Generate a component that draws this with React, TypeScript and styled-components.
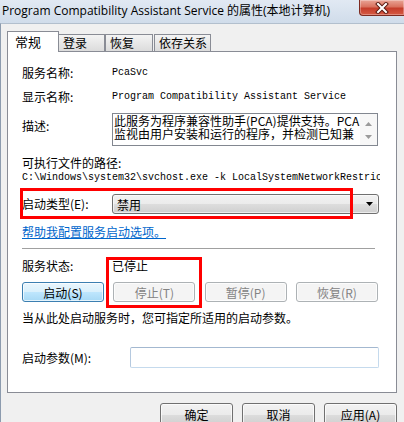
import React from "react";
import styled, { createGlobalStyle } from "styled-components";

const GlobalStyle = createGlobalStyle`
  html, body {
    margin: 0;
    padding: 0;
    background: #f0f0f0;
  }
  body {
    font-family: "Noto Sans CJK SC", sans-serif;
    font-size: 12px;
    color: #000;
  }
`;

const CJK = `"Noto Sans CJK SC", sans-serif`;
const MONO = `"Liberation Mono", "Noto Sans CJK SC", monospace`;

// window frame
const Window = styled.div`
  position: relative;
  width: 404px;
  height: 422px;
  overflow: hidden;
  background: #f0f0f0;
  display: flex;
  flex-direction: column;
`;

const TitleBar = styled.div`
  height: 23px;
  flex: none;
  display: flex;
  align-items: flex-start;
  justify-content: space-between;
  background: linear-gradient(#e1e9f3, #d0dcea);
`;

const Title = styled.div`
  padding: 3px 0 0 2px;
  font-family: "Open Sans", "Noto Sans CJK SC", sans-serif;
  font-size: 12px;
  line-height: 16px;
  white-space: nowrap;
`;

const CloseButton = styled.div`
  flex: none;
  width: 45px;
  height: 16px;
  box-sizing: border-box;
  border: 1px solid #7d2a20;
  border-top: none;
  border-right: none;
  border-radius: 0 0 0 4px;
  background: linear-gradient(#e9a496 0%, #d9725f 45%, #c53d2b 55%, #d65a44 100%);
  box-shadow: inset 0 0 0 1px rgba(255, 255, 255, 0.3);
  display: flex;
  align-items: center;
  justify-content: center;
`;

const Client = styled.div`
  flex: 1;
  display: flex;
  flex-direction: column;
  border-top: 1px solid #b2bfcd;
  border-left: 1px solid #8c9bae;
  padding: 7px 7px 0 6px;
`;

// tabs
const TabStrip = styled.div`
  height: 20px;
  display: flex;
  align-items: flex-end;
`;

const Tab = styled.div<{ $active?: boolean; $w: number; $ml?: number }>`
  position: relative;
  box-sizing: border-box;
  width: ${(p) => p.$w}px;
  height: ${(p) => (p.$active ? 21 : 17)}px;
  margin-left: ${(p) => p.$ml ?? 0}px;
  margin-bottom: ${(p) => (p.$active ? -1 : 0)}px;
  z-index: ${(p) => (p.$active ? 1 : 0)};
  padding-left: ${(p) => (p.$active ? 7 : 4)}px;
  border: 1px solid #898c95;
  border-bottom: none;
  background: ${(p) =>
    p.$active ? "#fff" : "linear-gradient(#f4f4f4, #e8e8e8 50%, #dcdcdc)"};
  display: flex;
  align-items: center;
  font-family: ${CJK};
  font-size: ${(p) => (p.$active ? 13 : 12)}px;
  line-height: 16px;
`;

const Panel = styled.div`
  box-sizing: border-box;
  height: 342px;
  border: 1px solid #898c95;
  background: #fff;
  padding: 0 16px 0 14px;
  display: flex;
  flex-direction: column;
`;

// form rows
const Row = styled.div<{ $mt: number; $h: number }>`
  display: flex;
  align-items: center;
  margin-top: ${(p) => p.$mt}px;
  height: ${(p) => p.$h}px;
  flex: none;
`;

const Label = styled.div<{ $w?: number; $pt?: number }>`
  flex: none;
  width: ${(p) => p.$w ?? 90}px;
  align-self: ${(p) => (p.$pt !== undefined ? "flex-start" : "center")};
  padding-top: ${(p) => p.$pt ?? 0}px;
  font-family: ${CJK};
  font-size: 12px;
  line-height: 16px;
  white-space: nowrap;
`;

const Value = styled.div`
  font-family: ${MONO};
  font-size: 10px;
  line-height: 16px;
  white-space: nowrap;
`;

const PlainText = styled.div`
  font-family: ${CJK};
  font-size: 12px;
  line-height: 16px;
  white-space: nowrap;
`;

const PathText = styled.div`
  font-family: ${MONO};
  font-size: 10px;
  line-height: 14px;
  white-space: nowrap;
  overflow: hidden;
  height: 14px;
  flex: none;
`;

const DescBox = styled.div`
  box-sizing: border-box;
  width: 266px;
  height: 33px;
  border: 1px solid #828790;
  display: flex;
  overflow: hidden;
`;

const DescText = styled.div`
  flex: 1;
  overflow: hidden;
  padding-left: 1px;
  font-family: ${CJK};
  font-size: 12px;
  line-height: 13px;
  white-space: nowrap;
`;

const ScrollBar = styled.div`
  flex: none;
  width: 17px;
  background: #f7f7f7;
  display: flex;
  flex-direction: column;
  align-items: center;
  justify-content: space-between;
  padding: 8px 0 6px;
`;

const Select = styled.div`
  box-sizing: border-box;
  width: 267px;
  height: 20px;
  border: 1px solid #707070;
  border-radius: 3px;
  background: linear-gradient(#f2f2f2 0%, #ebebeb 50%, #dddddd 51%, #cfcfcf 100%);
  box-shadow: inset 0 0 0 1px rgba(255, 255, 255, 0.6);
  display: flex;
  align-items: center;
  justify-content: space-between;
  padding: 0 5px 0 4px;
  font-family: ${CJK};
  font-size: 12px;
`;

const Link = styled.a`
  align-self: flex-start;
  color: #0066cc;
  text-decoration: underline;
  font-family: ${CJK};
  font-size: 12px;
  line-height: 16px;
  cursor: pointer;
`;

const Separator = styled.div`
  width: 353px;
  height: 1px;
  margin-top: 8px;
  background: #a0a0a0;
  flex: none;
`;

const ButtonRow = styled.div`
  width: 356px;
  margin-top: 8px;
  display: flex;
  justify-content: space-between;
`;

const Button = styled.div<{ $variant?: "default" | "focused" | "disabled"; $w?: number; $h?: number }>`
  box-sizing: border-box;
  width: ${(p) => p.$w ?? 82}px;
  height: ${(p) => p.$h ?? 20}px;
  border-radius: 3px;
  border: 1px solid
    ${(p) =>
      p.$variant === "focused" ? "#3c7fb1" : p.$variant === "disabled" ? "#adb2b5" : "#707070"};
  background: ${(p) =>
    p.$variant === "focused"
      ? "linear-gradient(#eaf6fd 0%, #d9f0fc 50%, #bee6fd 51%, #a7d9f5 100%)"
      : p.$variant === "disabled"
      ? "#f4f4f4"
      : "linear-gradient(#f2f2f2 0%, #ebebeb 50%, #dddddd 51%, #cfcfcf 100%)"};
  box-shadow: inset 0 0 0 1px rgba(255, 255, 255, 0.7);
  color: ${(p) => (p.$variant === "disabled" ? "#838383" : "#000")};
  display: flex;
  align-items: center;
  justify-content: center;
  font-family: ${CJK};
  font-size: 12px;
  white-space: nowrap;
`;

const Input = styled.div`
  box-sizing: border-box;
  width: 249px;
  height: 21px;
  border: 1px solid #abadb3;
  border-top-color: #a3b8d0;
  border-right-color: #c5daed;
  border-bottom-color: #c5daed;
  border-left-color: #b5c9df;
  border-radius: 2px;
  background: #fff;
`;

const Footer = styled.div`
  margin-top: 10px;
  display: flex;
  justify-content: flex-end;
  gap: 9px;
`;

// red annotation frames drawn over the dialog
const Highlight = styled.div<{ $x: number; $y: number; $w: number; $h: number }>`
  position: absolute;
  left: ${(p) => p.$x}px;
  top: ${(p) => p.$y}px;
  width: ${(p) => p.$w}px;
  height: ${(p) => p.$h}px;
  box-sizing: border-box;
  border: 3px solid #ff0000;
  pointer-events: none;
`;

function CloseGlyph() {
  return (
    <svg width="14" height="12" viewBox="0 0 14 12">
      <path d="M3 2 L11 10 M11 2 L3 10" stroke="#5a1a12" strokeWidth="4" strokeLinecap="square" />
      <path d="M3 2 L11 10 M11 2 L3 10" stroke="#fff" strokeWidth="2" strokeLinecap="square" />
    </svg>
  );
}

function Arrow({ up, color }: { up?: boolean; color: string }) {
  return (
    <svg width="7" height="4" viewBox="0 0 7 4">
      <path d={up ? "M3.5 0 L7 4 L0 4 Z" : "M0 0 L7 0 L3.5 4 Z"} fill={color} />
    </svg>
  );
}

export default function App() {
  return (
    <Window>
      <GlobalStyle />
      <TitleBar>
        <Title>Program Compatibility Assistant Service 的属性(本地计算机)</Title>
        <CloseButton>
          <CloseGlyph />
        </CloseButton>
      </TitleBar>
      <Client>
        <TabStrip>
          <Tab $active $w={52}>常规</Tab>
          <Tab $w={47} $ml={-1}>登录</Tab>
          <Tab $w={48}>恢复</Tab>
          <Tab $w={57} $ml={1}>依存关系</Tab>
        </TabStrip>
        <Panel>
          <Row $mt={12} $h={18}>
            <Label>服务名称:</Label>
            <Value>PcaSvc</Value>
          </Row>
          <Row $mt={6} $h={18}>
            <Label>显示名称:</Label>
            <Value>Program Compatibility Assistant Service</Value>
          </Row>
          <Row $mt={7} $h={33}>
            <Label $pt={5}>描述:</Label>
            <DescBox>
              <DescText>
                此服务为程序兼容性助手(PCA)提供支持。PCA
                <br />
                监视由用户安装和运行的程序，并检测已知兼
              </DescText>
              <ScrollBar>
                <Arrow up color="#9a9a9a" />
                <Arrow color="#9a9a9a" />
              </ScrollBar>
            </DescBox>
          </Row>
          <Row $mt={9} $h={16}>
            <PlainText>可执行文件的路径:</PlainText>
          </Row>
          <PathText>C:\Windows\system32\svchost.exe -k LocalSystemNetworkRestricted</PathText>
          <Row $mt={9} $h={20}>
            <Label>启动类型(E):</Label>
            <Select>
              <span>禁用</span>
              <Arrow color="#000" />
            </Select>
          </Row>
          <Row $mt={10} $h={16}>
            <Link>帮助我配置服务启动选项。</Link>
          </Row>
          <Separator />
          <Row $mt={9} $h={16}>
            <Label>服务状态:</Label>
            <PlainText>已停止</PlainText>
          </Row>
          <ButtonRow>
            <Button $variant="focused">启动(S)</Button>
            <Button $variant="disabled">停止(T)</Button>
            <Button $variant="disabled">暂停(P)</Button>
            <Button $variant="disabled">恢复(R)</Button>
          </ButtonRow>
          <Row $mt={8} $h={16}>
            <PlainText>当从此处启动服务时，您可指定所适用的启动参数。</PlainText>
          </Row>
          <Row $mt={21} $h={21}>
            <Label $w={108}>启动参数(M):</Label>
            <Input />
          </Row>
        </Panel>
        <Footer>
          <Button $w={73} $h={23}>确定</Button>
          <Button $w={73} $h={23}>取消</Button>
          <Button $w={73} $h={23}>应用(A)</Button>
        </Footer>
      </Client>
      <Highlight $x={20} $y={188} $w={333} $h={31} />
      <Highlight $x={106} $y={257} $w={96} $h={51} />
    </Window>
  );
}
